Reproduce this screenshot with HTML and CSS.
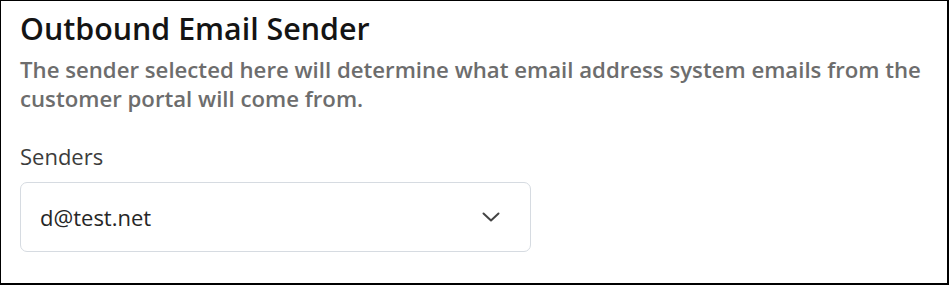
FILE: index.html
```html
<!DOCTYPE html>
<html>
<head>
<meta charset="utf-8">
<link rel="stylesheet" href="styles.css">
</head>
<body>
<div class="panel">
  <h1 class="title">Outbound Email Sender</h1>
  <p class="desc">The sender selected here will determine what email address system emails from the customer portal will come from.</p>
  <div class="field">
    <label class="label">Senders</label>
    <div class="select">
      <span class="value">d@test.net</span>
      <svg class="chev" width="18" height="10" viewBox="0 0 18 10"><path d="M1.5 1.5 L9 8.5 L16.5 1.5" fill="none" stroke="#444" stroke-width="2" stroke-linecap="round" stroke-linejoin="round"/></svg>
    </div>
  </div>
</div>
</body>
</html>
```
FILE: styles.css
```css
html, body { margin: 0; padding: 0; background: #fff; }
.panel {
  box-sizing: border-box;
  width: 949px;
  height: 285px;
  border-style: solid;
  border-color: #000;
  border-width: 1px 2px 2px 1px;
  padding: 9px 12px 0 19px;
  font-family: "Open Sans", "Noto Sans", sans-serif;
}
.title {
  margin: 0;
  font-size: 30.4px;
  font-weight: 600;
  line-height: 37px;
  color: #141414;
}
.desc {
  margin: 8px 0 0;
  font-size: 22.2px;
  line-height: 29px;
  color: #6d6d6d;
  font-weight: 600;
}
.field { margin-top: 30px; display: flex; flex-direction: column; gap: 13px; }
.label { font-size: 22px; line-height: 26px; color: #3c3c3c; font-weight: 500; }
.select {
  box-sizing: border-box;
  width: 511px;
  height: 70px;
  border: 1px solid #d6dbe1;
  border-radius: 7px;
  display: flex;
  align-items: center;
  justify-content: space-between;
  padding: 0 30px 0 19px;
}
.value { font-size: 22px; font-weight: 500; color: #262626; }
.chev { display: block; }
```
